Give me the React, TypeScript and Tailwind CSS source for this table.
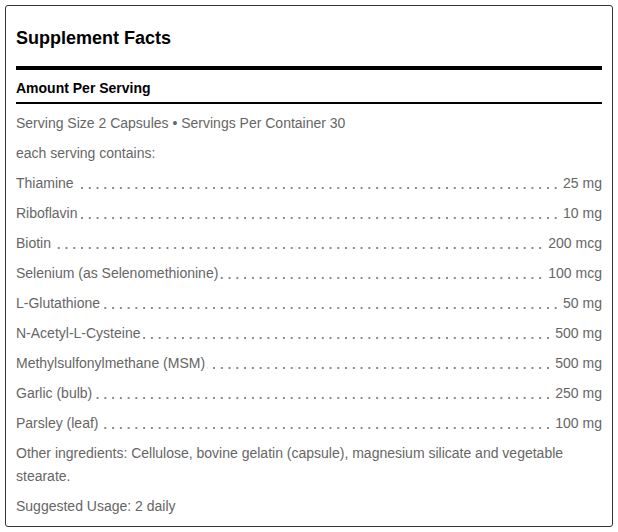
import React from 'react';

const items: { name: string; amount: string }[] = [
  { name: 'Thiamine', amount: '25 mg' },
  { name: 'Riboflavin', amount: '10 mg' },
  { name: 'Biotin', amount: '200 mcg' },
  { name: 'Selenium (as Selenomethionine)', amount: '100 mcg' },
  { name: 'L-Glutathione', amount: '50 mg' },
  { name: 'N-Acetyl-L-Cysteine', amount: '500 mg' },
  { name: 'Methylsulfonylmethane (MSM)', amount: '500 mg' },
  { name: 'Garlic (bulb)', amount: '250 mg' },
  { name: 'Parsley (leaf)', amount: '100 mg' },
];

const App: React.FC = () => {
  return (
    <div className="p-[5px] bg-white" style={{ fontFamily: '"Liberation Sans", Arial, sans-serif' }}>
      <div className="border border-[#333] rounded-[3px] h-[522px] px-[10px] pt-[20px]">
        {/* Title */}
        <h1 className="text-[18px] leading-[24px] font-bold text-black">Supplement Facts</h1>
        <div className="mt-[16px] h-[4px] bg-black" />

        {/* Amount header */}
        <h2 className="mt-[8px] text-[14px] leading-[20px] font-bold text-black">Amount Per Serving</h2>
        <div className="mt-[4px] h-[2px] bg-black" />

        {/* Body */}
        <div className="mt-[8px] text-[14px] leading-[23px] text-[#666] flex flex-col gap-[7px]">
          <p>Serving Size 2 Capsules • Servings Per Container 30</p>
          <p>each serving contains:</p>

          {items.map((item) => (
            <div
              key={item.name}
              className="flex justify-between bg-[radial-gradient(circle,#8a8a8a_0.8px,transparent_1.1px)] bg-[length:7.78px_2px] bg-[position:0_15px] bg-repeat-x"
            >
              <span className="bg-white pr-[2px]">{item.name}</span>
              <span className="bg-white pl-[1px]">{item.amount}</span>
            </div>
          ))}

          <p>Other ingredients: Cellulose, bovine gelatin (capsule), magnesium silicate and vegetable stearate.</p>
          <p>Suggested Usage: 2 daily</p>
        </div>
      </div>
    </div>
  );
};

export default App;
